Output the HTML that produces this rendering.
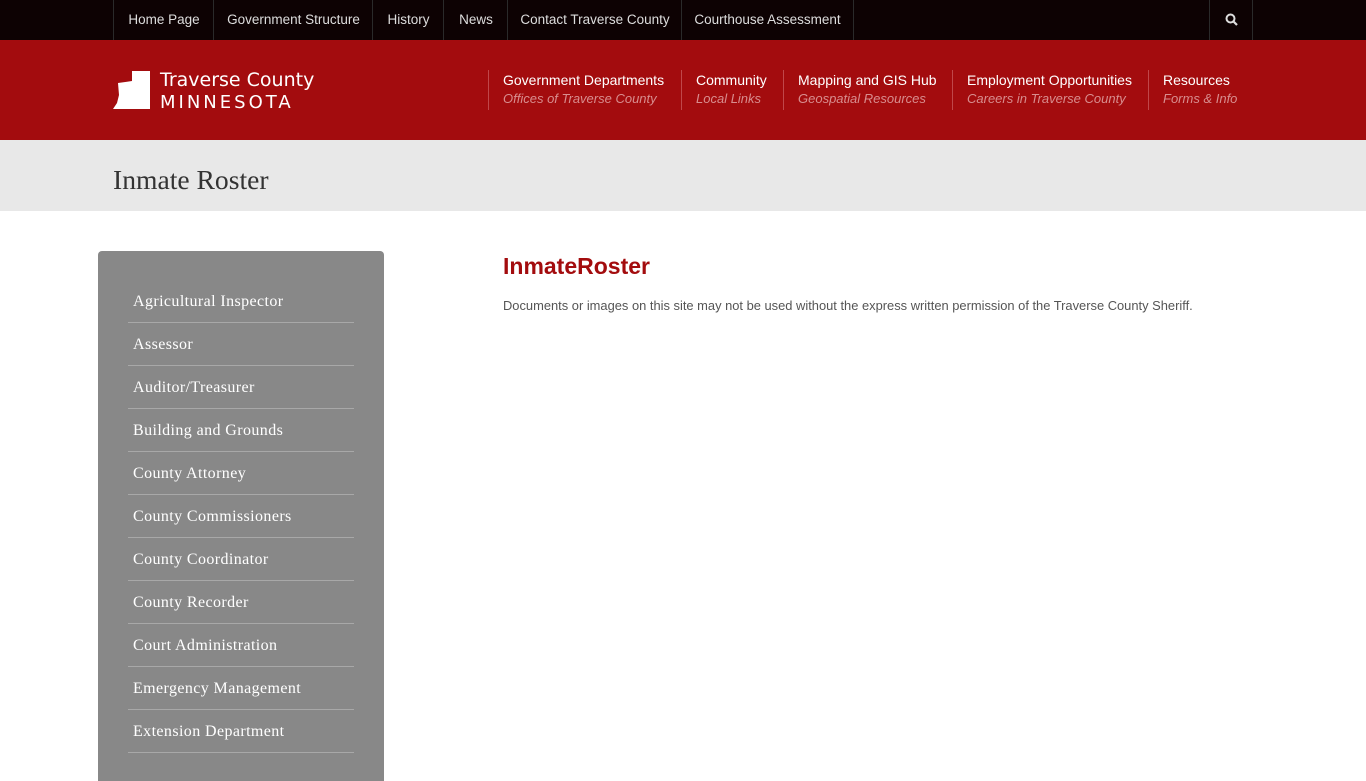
<!DOCTYPE html>
<html><head><meta charset="utf-8"><style>
*{margin:0;padding:0;box-sizing:border-box}
body{width:1366px;height:768px;overflow:hidden;background:#fff;font-family:"Liberation Sans",Arial,sans-serif;position:relative}
.top{height:40px;background:#0d0203;position:relative}
.top a{position:absolute;top:0;height:40px;line-height:39px;color:#ddd;font-size:13.5px;text-decoration:none;text-align:center;border-left:1px solid #2a2a2a}
.hdr{height:100px;background:#a30c0e;position:relative}
.nav{position:absolute;top:30px;border-left:1px solid #c0474a;height:40px;padding-left:14px;white-space:nowrap}
.nav b{display:block;font-weight:normal;color:#fff;font-size:14px;line-height:18px;margin-top:1px}
.nav i{display:block;color:#d88d8e;font-size:13px;line-height:20px}
.title{height:71px;background:#e8e8e8;position:relative}
.title h1{position:absolute;left:113px;top:24px;font-family:"Liberation Serif",serif;font-weight:normal;font-size:27.6px;color:#333}
.side{position:absolute;left:98px;top:251px;width:286px;height:530px;background:#888;border-radius:4px 4px 0 0}
.side div{position:absolute;left:30px;width:226px;height:43px;border-bottom:1px solid #a8a8a8;font-family:"Liberation Serif",serif;font-size:16px;letter-spacing:0.4px;color:#fff;padding-left:5px;line-height:43px;white-space:nowrap}
h2{position:absolute;left:503px;top:253px;color:#a30c0e;font-size:23px}
p{position:absolute;left:503px;top:298px;font-size:12.9px;color:#555;white-space:nowrap}
</style></head><body>
<div class="top">
<a style="left:113px;width:101px">Home Page</a>
<a style="left:213px;width:160px">Government Structure</a>
<a style="left:372px;width:72px">History</a>
<a style="left:443px;width:65px">News</a>
<a style="left:507px;width:175px">Contact Traverse County</a>
<a style="left:681px;width:173px;border-right:1px solid #2a2a2a">Courthouse Assessment</a>
<a style="left:1209px;width:44px;border-right:1px solid #2a2a2a"><svg width="13" height="13" viewBox="0 0 13 13" style="margin-top:13px"><circle cx="5.5" cy="5.5" r="4" fill="none" stroke="#ddd" stroke-width="2"/><path d="M8.5 8.5l3.5 3.5" stroke="#ddd" stroke-width="2.2"/></svg></a>
</div>
<div class="hdr">
<svg style="position:absolute;left:113px;top:31px" width="40" height="40" viewBox="0 0 40 40"><path d="M19 0h18v38H0l4-6 2-8-1-12 14-2z" fill="#fff"/></svg>
<div style="position:absolute;left:160px;top:29px;color:#fff;font-family:'DejaVu Sans',sans-serif;font-size:19px;line-height:22px;white-space:nowrap">Traverse County<br><span style="letter-spacing:3px;font-size:18px">MINNESOTA</span></div>
<div class="nav" style="left:488px"><b>Government Departments</b><i>Offices of Traverse County</i></div>
<div class="nav" style="left:681px"><b>Community</b><i>Local Links</i></div>
<div class="nav" style="left:783px"><b>Mapping and GIS Hub</b><i>Geospatial Resources</i></div>
<div class="nav" style="left:952px"><b>Employment Opportunities</b><i>Careers in Traverse County</i></div>
<div class="nav" style="left:1148px"><b>Resources</b><i>Forms &amp; Info</i></div>
</div>
<div class="title"><h1>Inmate Roster</h1></div>
<div class="side">
<div style="top:29px">Agricultural Inspector</div>
<div style="top:72px">Assessor</div>
<div style="top:115px">Auditor/Treasurer</div>
<div style="top:158px">Building and Grounds</div>
<div style="top:201px">County Attorney</div>
<div style="top:244px">County Commissioners</div>
<div style="top:287px">County Coordinator</div>
<div style="top:330px">County Recorder</div>
<div style="top:373px">Court Administration</div>
<div style="top:416px">Emergency Management</div>
<div style="top:459px">Extension Department</div>
</div>
<h2>InmateRoster</h2>
<p>Documents or images on this site may not be used without the express written permission of the Traverse County Sheriff.</p>
</body></html>
